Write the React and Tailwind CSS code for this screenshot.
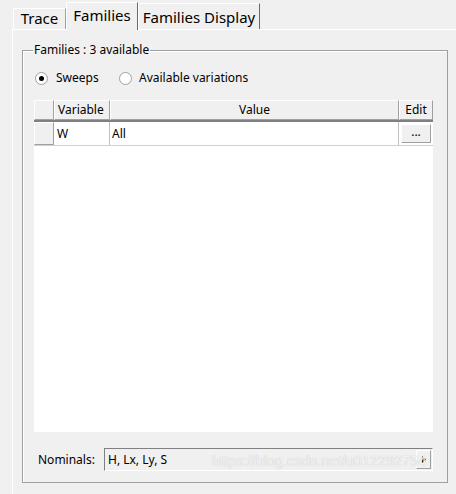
import React from "react";

const font = { fontFamily: '"Noto Sans", "Open Sans", sans-serif' };

function Raised({ className = "", children }) {
  return (
    <div
      className={
        "bg-[#f0f0f0] border-t border-l border-t-white border-l-white border-r border-b border-r-[#a0a0a0] border-b-[#a0a0a0] " +
        className
      }
    >
      {children}
    </div>
  );
}

function Radio({ checked }) {
  return (
    <div className="w-[13px] h-[13px] rounded-full border border-[#a0a0a0] bg-white flex items-center justify-center shrink-0">
      {checked && <div className="w-[5px] h-[5px] rounded-full bg-black" />}
    </div>
  );
}

export default function App() {
  return (
    <div
      className="relative w-[456px] h-[494px] bg-[#f0f0f0] overflow-hidden text-[12px] text-black"
      style={font}
    >
      {/* Tabs */}
      <div className="flex items-end pl-[13px] h-[29px] relative z-10">
        <div className="w-[53px] h-[21px] border-l border-t border-white border-r border-r-[#a0a0a0] flex items-center justify-center text-[15px] leading-none pb-[1px]">
          Trace
        </div>
        <div className="w-[72px] h-[28px] -mb-[1px] bg-[#f0f0f0] border-l border-t border-white border-r border-r-[#696969] flex items-center justify-center text-[15px] leading-none pb-[3px]">
          Families
        </div>
        <div className="w-[122px] h-[26px] border-l border-t border-white border-r border-r-[#696969] flex items-center justify-center text-[15px] leading-none pt-[2px]">
          Families Display
        </div>
      </div>

      {/* Panel */}
      <div className="ml-[12px] border-l border-t border-white h-[500px] pl-[9px] pt-[20px]">
        {/* Group box */}
        <div className="relative w-[426px] h-[433px] border border-[#a0a0a0] shadow-[inset_1px_1px_0_#ffffff] pl-[11px] pt-[20px] flex flex-col">
          <div className="absolute left-[10px] top-[-9px] bg-[#f0f0f0] px-[1px] leading-[16px]">
            Families : 3 available
          </div>

          {/* Radios */}
          <div className="flex items-center h-[14px] pl-[1px]">
            <Radio checked />
            <div className="ml-[8px] w-[43px] overflow-hidden whitespace-nowrap">Sweeps</div>
            <div className="ml-[20px]">
              <Radio />
            </div>
            <div className="ml-[7px] whitespace-nowrap">Available variations</div>
          </div>

          {/* Table */}
          <div className="mt-[15px] w-[399px] h-[332px] bg-white flex flex-col">
            <div className="flex h-[22px] border-b-2 border-b-[#808080]">
              <Raised className="w-[20px] h-full" />
              <Raised className="w-[56px] h-full flex items-center pl-[3px]">Variable</Raised>
              <Raised className="w-[289px] h-full flex items-center justify-center">Value</Raised>
              <Raised className="w-[34px] h-full flex items-center justify-center">Edit</Raised>
            </div>
            <div className="flex h-[24px] border-b border-b-[#d0d0d0]">
              <Raised className="w-[20px] h-full" />
              <div className="w-[56px] h-full flex items-center pl-[3px] border-r border-[#c0c0c0]">W</div>
              <div className="w-[289px] h-full flex items-center pl-[2px] border-r border-[#c0c0c0]">All</div>
              <div className="w-[34px] h-full flex items-center justify-center">
                <Raised className="w-[30px] h-[19px] flex items-center justify-center leading-none pb-[3px] border-r-[#696969] border-b-[#696969]">
                  ...
                </Raised>
              </div>
            </div>
          </div>

          {/* Nominals */}
          <div className="mt-[16px] flex items-center h-[23px]">
            <div className="pl-[4px] w-[70px]">Nominals:</div>
            <div className="w-[329px] h-[23px] border-t border-l border-[#808080] border-r border-b border-r-white border-b-white bg-[#f0f0f0] flex items-center">
              <div className="flex-1 pl-[3px]">H, Lx, Ly, S</div>
              <Raised className="w-[15px] h-[19px] mr-[1px] flex items-center justify-center border-r-[#696969] border-b-[#696969]">
                <svg width="4" height="7" viewBox="0 0 4 7">
                  <path d="M0 0 L4 3.5 L0 7 Z" fill="black" />
                </svg>
              </Raised>
            </div>
          </div>
        </div>
      </div>

      {/* Watermark */}
      <div
        className="absolute left-[212px] top-[454px] text-[14.5px] whitespace-nowrap text-white/80 leading-none"
        style={{ fontFamily: '"Liberation Sans", Arial, sans-serif', textShadow: "0 0 1px #b0b0b0" }}
      >
        https://blog.csdn.net/u012292754
      </div>
    </div>
  );
}
